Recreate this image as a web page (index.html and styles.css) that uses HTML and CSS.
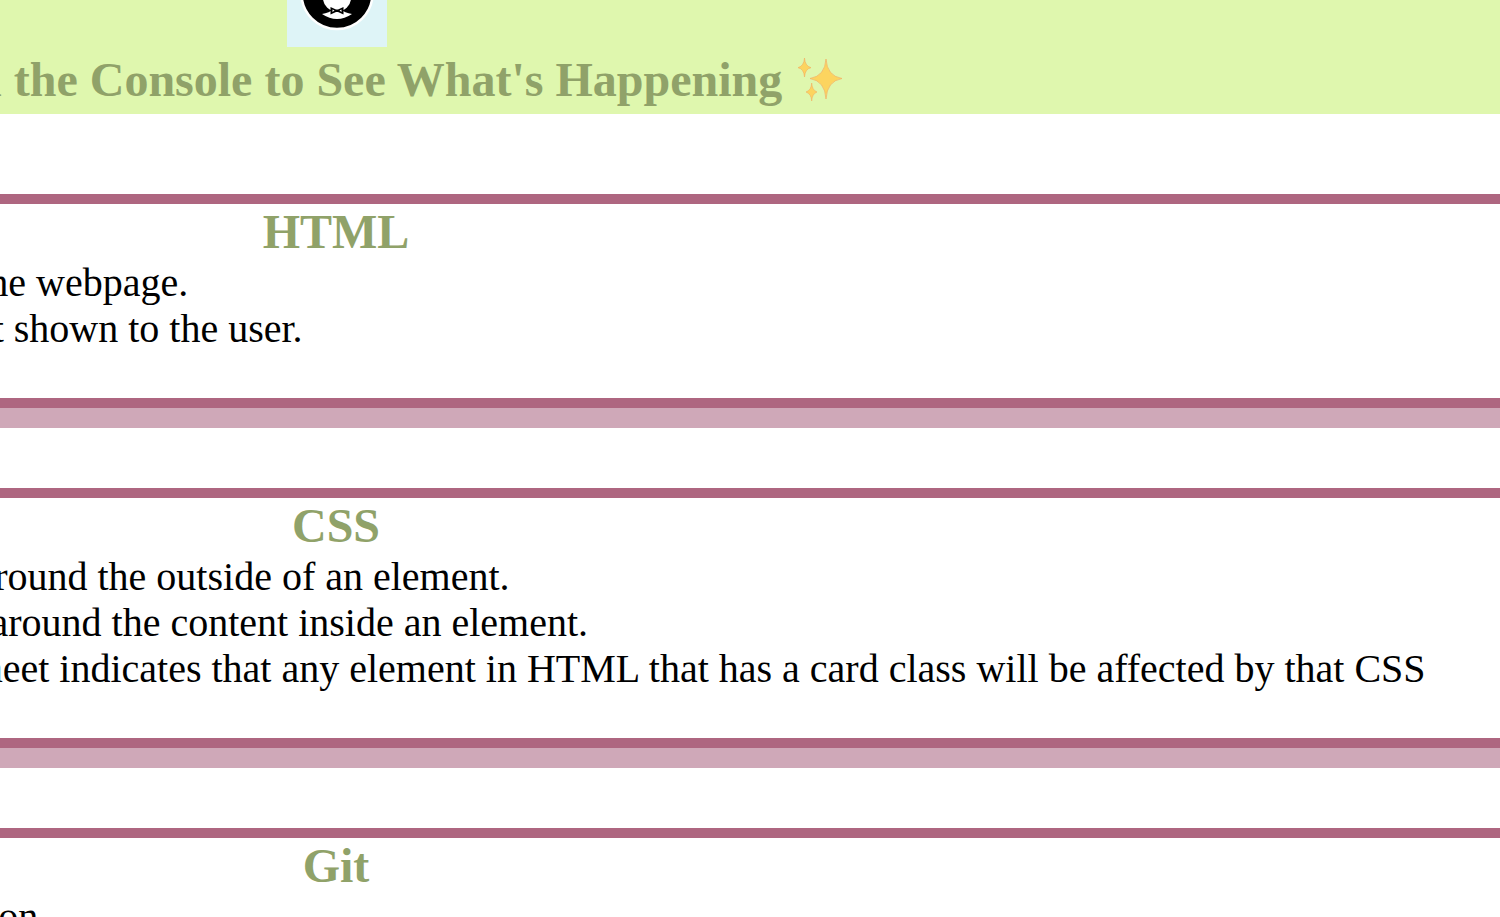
FILE: index.html
```html
<!DOCTYPE html>
<html lang="en">
<head>
    <meta charset="UTF-8">
    <title>Cheat Sheet</title>
    <link rel="stylesheet" href="styles.css">
</head>
<body>

<div class="page">
    <header class="banner">
        <div class="avatar">
            <svg viewBox="0 0 100 100" width="100" height="100">
                <circle cx="50" cy="46.5" r="35.5" fill="#000" stroke="#fff" stroke-width="2.5"/>
                <ellipse cx="50" cy="51" rx="14" ry="13.5" fill="#fff"/>
                <path d="M35 67 Q42 66 47 62 L53 62 Q58 66 65 67 Q50 77 35 67Z" fill="#fff"/>
                <path d="M43.5 60 L49 62.5 L51 62.5 L56.5 60 L56.5 67.5 L51 65 L49 65 L43.5 67.5Z" fill="#000"/>
                <path d="M45.5 62.5 L47.5 63.5 L45.5 65Z M54.5 62.5 L52.5 63.5 L54.5 65Z" fill="#fff"/>
            </svg>
        </div>
        <h1 class="banner-title">
            <svg class="sparkles" viewBox="0 0 46 46"><use href="#sparkle"/></svg>
            Open the Console to See What's Happening
            <svg class="sparkles" viewBox="0 0 46 46">
                <g id="sparkle">
                    <path d="M29 2 Q30 19 45 21.5 Q30 24 29 42 Q28 24 13 21.5 Q28 19 29 2Z" fill="#fcd45f" stroke="#f4ad62" stroke-width=".7"/>
                    <path d="M7.5 1 Q8 9 14 10.7 Q8 12 7.5 20 Q7 12 1 10.7 Q7 9 7.5 1Z" fill="#fcd45f" stroke="#f4ad62" stroke-width=".6"/>
                    <path d="M14.7 26 Q15 33 20 35 Q15 37 14.7 44 Q14.4 37 9 35 Q14.4 33 14.7 26Z" fill="#fcd45f" stroke="#f4ad62" stroke-width=".6"/>
                </g>
            </svg>
        </h1>
    </header>

    <section class="card">
        <h2>HTML</h2>
        <p>The body shows all the webpage.</p>
        <p>The head has data not shown to the user.</p>
    </section>

    <section class="card">
        <h2>CSS</h2>
        <p>Margin is the space around the outside of an element.</p>
        <p>Padding is the space around the content inside an element.</p>
        <p>Any .card in a stylesheet indicates that any element in HTML that has a card class will be affected by that CSS</p>
    </section>

    <section class="card">
        <h2>Git</h2>
        <p>Git tracks every version</p>
    </section>
</div>

</body>
</html>
```
FILE: styles.css
```css
body {
    margin: 0;
    overflow: hidden;
    background-color: #fff;
    font-family: "Liberation Serif", serif;
}

/* the shot is scrolled, so the page starts off to the left and above */
.page {
    width: 2672px;
    margin-left: -1000px;
    margin-top: -53px;
}

.banner {
    background-color: #dff7ae;
    margin-bottom: 80px;
}

.avatar {
    width: 100px;
    height: 100px;
    margin-left: 1287px;
    background-color: #def4f7;
}

.avatar svg {
    display: block;
}

.banner-title {
    margin: 0;
    padding-top: 2px;
    padding-bottom: 4px;
    font-size: 48px;
    line-height: 61px;
    text-align: center;
    color: #90a269;
}

.sparkles {
    width: 46px;
    height: 46px;
    margin-left: 3px;
    vertical-align: -7px;
}

.card {
    border-top: 10px solid #ae6680;
    border-bottom: 10px solid #ae6680;
    box-shadow: 0 20px 0 #cfa8b8;
    margin-bottom: 80px;
    padding-bottom: 46px;
}

.card h2 {
    margin: 0 0 1px;
    font-size: 48px;
    line-height: 55px;
    text-align: center;
    color: #90a269;
}

.card p {
    margin: 0 0 0 655px;
    font-size: 40px;
    line-height: 46px;
    color: #000;
}
```
